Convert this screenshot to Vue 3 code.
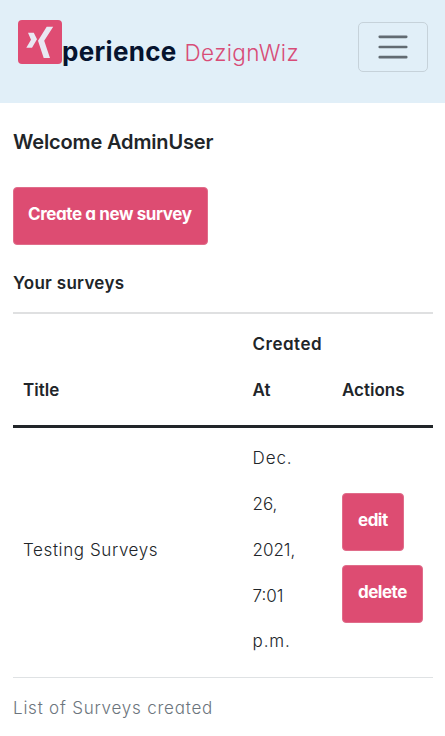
<script setup>
const surveys = [
  { title: 'Testing Surveys', created: ['Dec.', '26,', '2021,', '7:01', 'p.m.'] },
]
</script>

<template>
  <div class="page">
    <header class="navbar">
      <a class="brand">
        <svg class="logo" viewBox="0 0 44 44">
          <rect width="44" height="44" rx="4" fill="#df4c73" />
          <path d="M10 12.700h5.800L19 19.300l-5 8.400H8.300L13 19.800z" fill="#e9e8f3" />
          <path d="M28.700 6.700h6.500L26.200 20.700 32 38h-6.300L20 20.700z" fill="#e9e8f3" />
        </svg>
        <span class="name">perience</span>
        <span class="owner">DezignWiz</span>
      </a>
      <button class="toggler" aria-label="Toggle navigation">
        <svg viewBox="0 0 30 30" width="38" height="38">
          <path d="M4.500 7h21M4.500 15h21M4.500 23h21" stroke="#626b72" stroke-width="2" stroke-linecap="round" />
        </svg>
      </button>
    </header>
    <main>
      <h1>Welcome AdminUser</h1>
      <a class="btn create">Create a new survey</a>
      <h2>Your surveys</h2>
      <table>
        <thead>
          <tr>
            <th class="c-title">Title</th>
            <th class="c-date"><span class="created">Created</span><br />At</th>
            <th>Actions</th>
          </tr>
        </thead>
        <tbody>
          <tr v-for="survey in surveys" :key="survey.title">
            <td class="title">{{ survey.title }}</td>
            <td><div v-for="part in survey.created" :key="part" :class="{ word: /[a-z]/.test(part) }">{{ part }}</div></td>
            <td>
              <div class="actions">
                <a class="btn small">edit</a>
                <a class="btn small">delete</a>
              </div>
            </td>
          </tr>
        </tbody>
      </table>
      <p class="caption">List of Surveys created</p>
    </main>
  </div>
</template>

<style>
body { background: #fff; }
</style>

<style scoped>
.page { height: 736px; overflow: hidden; font-family: Inter, "Open Sans", sans-serif; font-size: 17px; font-weight: 300; color: #212529; font-feature-settings: "cv11" 1; }
.navbar { box-sizing: border-box; height: 103px; padding: 20px 17px 0 18px; background: #e1eff8; display: flex; justify-content: space-between; align-items: flex-start; }
.brand { display: flex; white-space: nowrap; }
.logo { width: 44px; height: 44px; }
.name { margin-top: 14px; font-size: 26px; line-height: 36px; font-weight: 650; letter-spacing: .3px; color: #06142f; }
.owner { margin: 15px 0 0 8px; font-size: 22.500px; line-height: 36px; letter-spacing: .35px; color: #d84c77; }
.toggler { box-sizing: border-box; width: 70px; height: 50px; margin-top: 2px; padding: 0; border: 1px solid #c6d2da; border-radius: 5px; background: none; display: flex; justify-content: center; align-items: center; }
main { padding: 0 12px 0 13px; }
h1, h2, .caption { margin: 0; white-space: nowrap; }
h1 { height: 84px; padding-top: 26px; box-sizing: border-box; font-size: 20px; line-height: 26px; font-weight: 600; letter-spacing: -.15px; }
.btn { box-sizing: border-box; display: flex; width: max-content; height: 58px; padding: 0 15px 5px; align-items: center; background: #dd4c72; border: 1px solid #e06d8a; border-radius: 4px; color: #fff; font-size: 17px; font-weight: 700; white-space: nowrap; letter-spacing: -.4px; }
.create { width: 195px; padding-left: 14px; }
.small { letter-spacing: -.5px; padding-bottom: 3px; }
h2 { height: 67px; padding-top: 25px; box-sizing: border-box; font-size: 17px; line-height: 26px; font-weight: 600; letter-spacing: .3px; }
table { width: 100%; table-layout: fixed; border-collapse: separate; border-spacing: 0; border-top: 2px solid #dfe0e1; line-height: 45.7px; }
th, td { padding: 8px 0 12px 10px; text-align: left; white-space: nowrap; }
th { vertical-align: bottom; font-weight: 600; border-bottom: 3px solid #212529; height: 91px; }
td { vertical-align: middle; border-bottom: 1px solid #dfe2e4; }
.c-title { width: 219.500px; }
.c-date { width: 79.500px; }
.created { letter-spacing: .5px; }
.title { letter-spacing: .6px; }
.word { letter-spacing: .9px; }
.actions { display: flex; flex-direction: column; gap: 14px; padding-top: 15px; }
.caption { padding-top: 17px; line-height: 26px; letter-spacing: .78px; color: #6c757d; }
</style>
